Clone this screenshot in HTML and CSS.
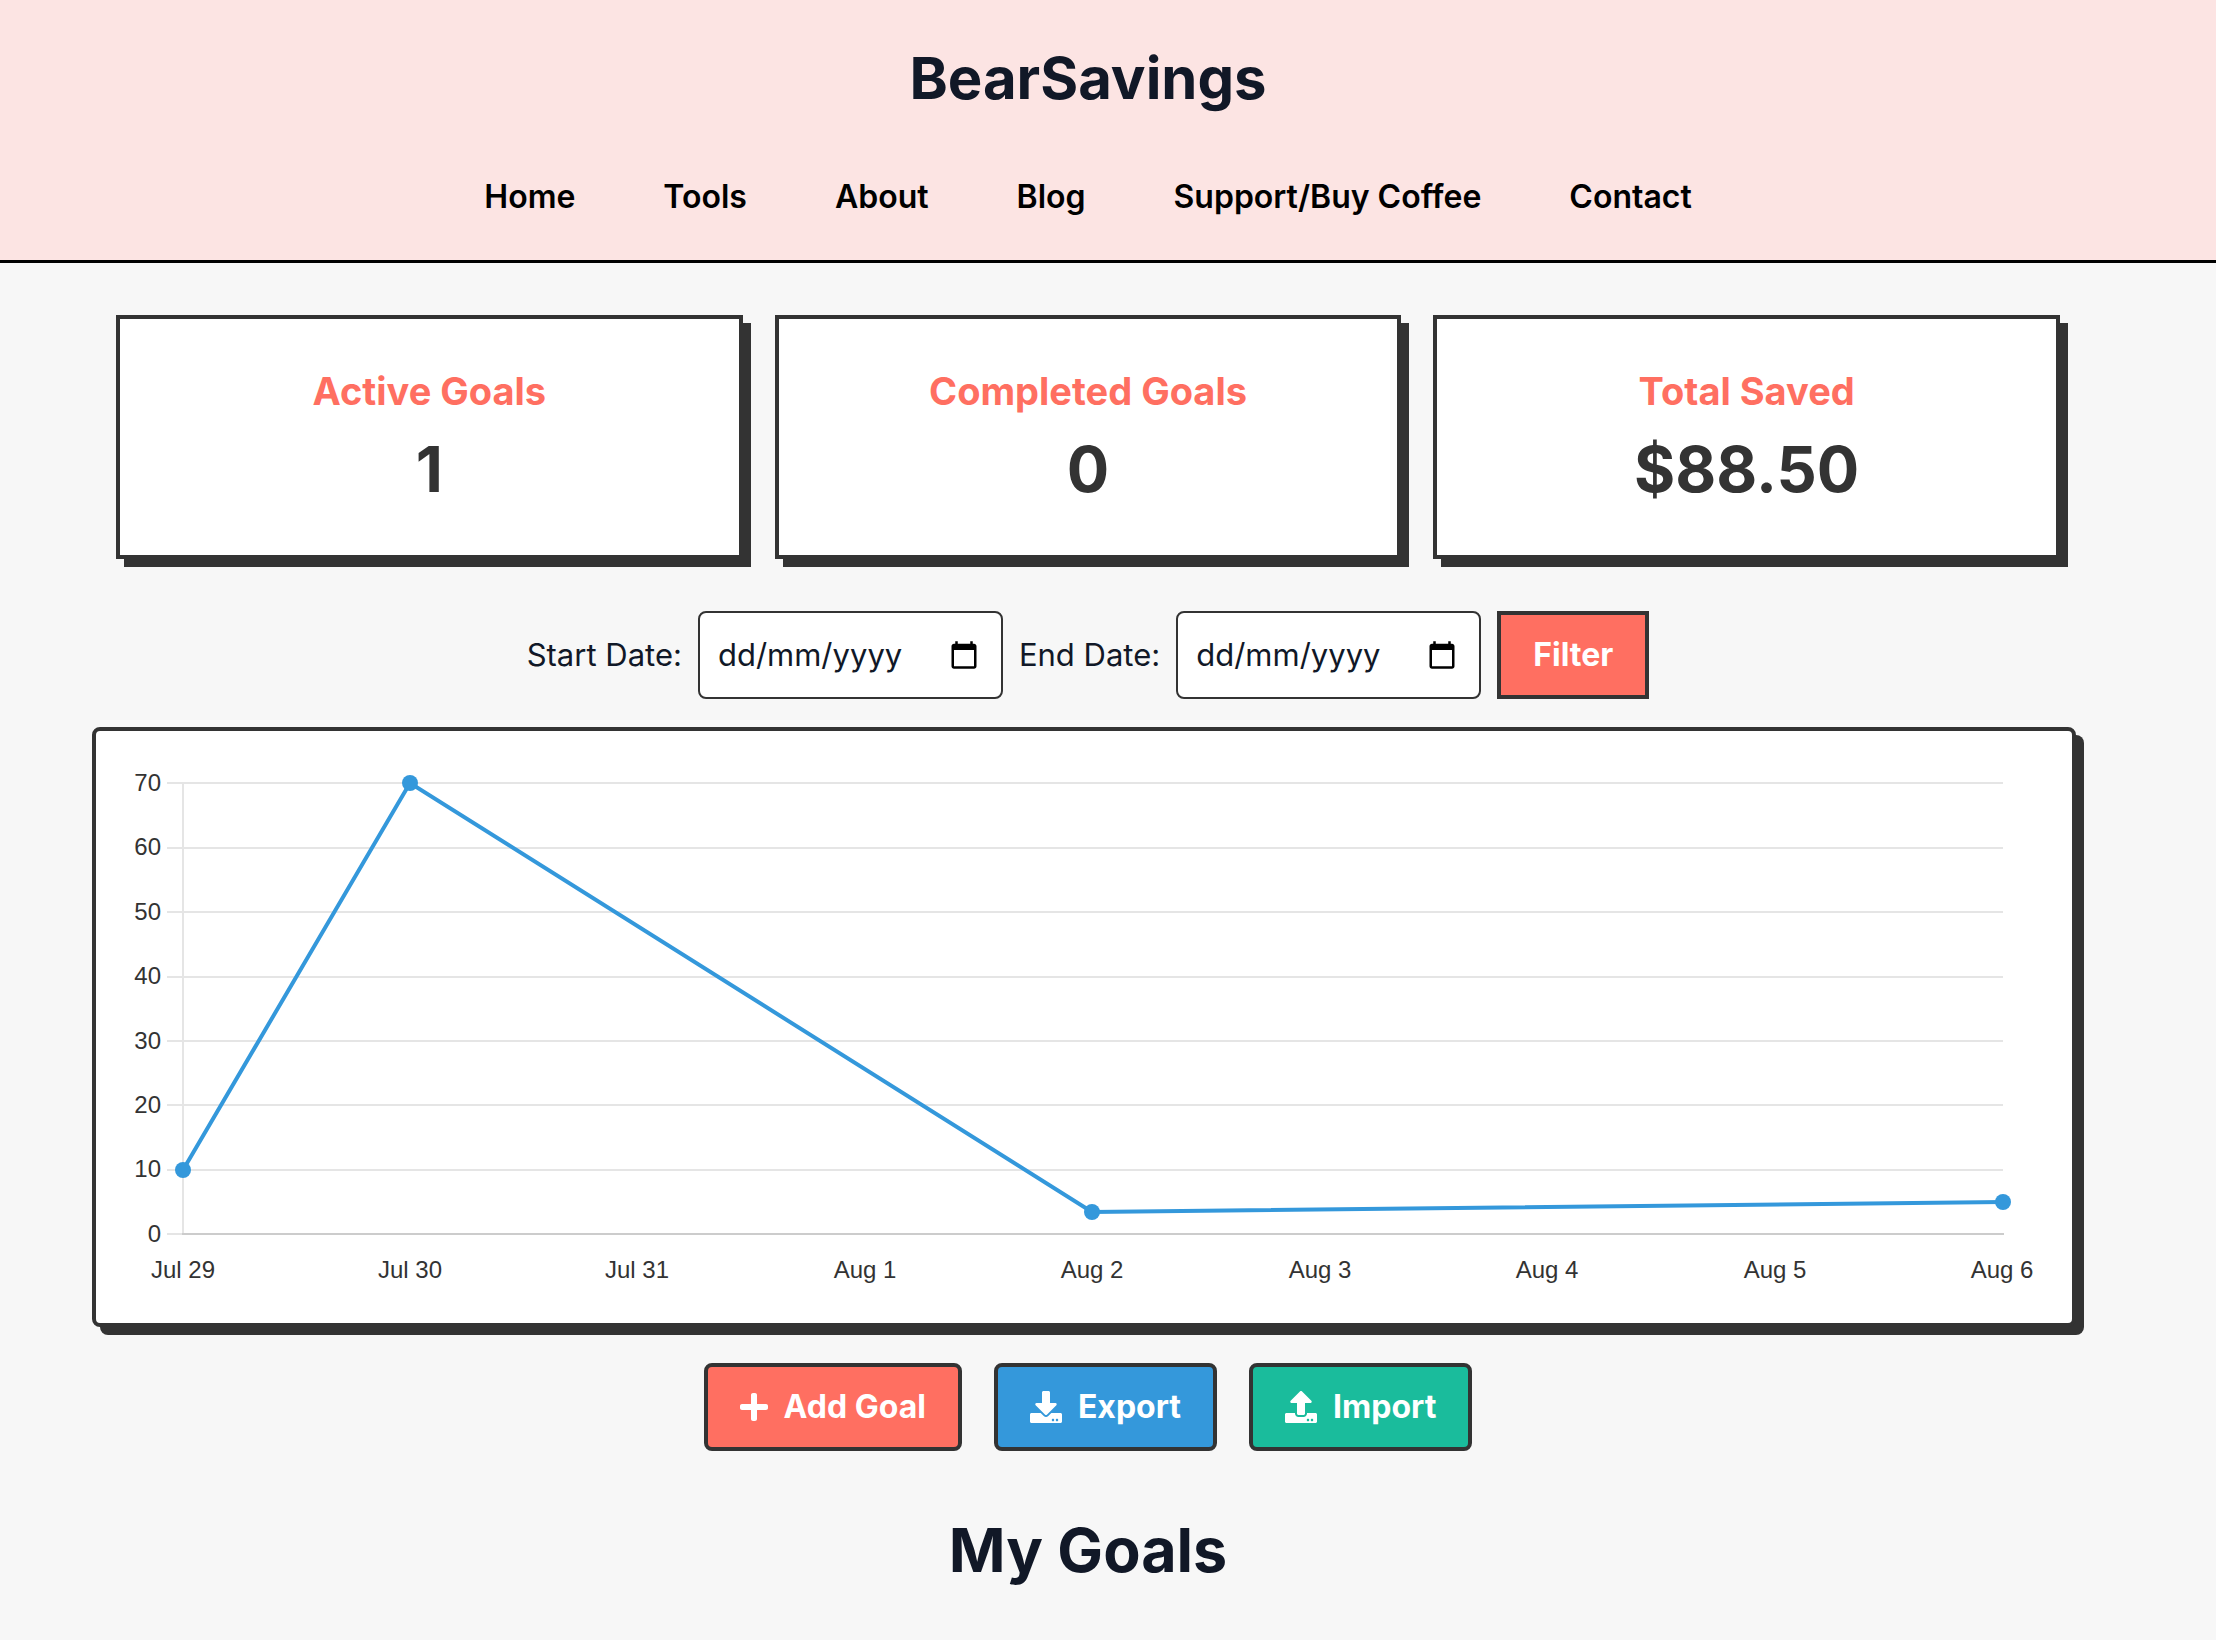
FILE: index.html
```html
<!DOCTYPE html>
<html lang="en">
<head>
    <meta charset="UTF-8">
    <meta name="viewport" content="width=device-width, initial-scale=1.0">
    <title>BearSavings</title>
    <link rel="stylesheet" href="styles.css">
</head>
<body>

<header class="site-header">
    <h1 class="site-title">BearSavings</h1>
    <nav class="site-nav">
        <a href="#">Home</a>
        <a href="#">Tools</a>
        <a href="#">About</a>
        <a href="#">Blog</a>
        <a href="#">Support/Buy Coffee</a>
        <a href="#">Contact</a>
    </nav>
</header>

<main class="container">
    <section class="stats">
        <div class="stat-card">
            <h2>Active Goals</h2>
            <p>1</p>
        </div>
        <div class="stat-card">
            <h2>Completed Goals</h2>
            <p>0</p>
        </div>
        <div class="stat-card">
            <h2>Total Saved</h2>
            <p>$88.50</p>
        </div>
    </section>

    <form class="date-filter">
        <label for="startDate">Start Date:</label>
        <div class="date-field">
            <input type="text" id="startDate" placeholder="dd/mm/yyyy">
            <button type="button" aria-label="Pick start date">
                <svg viewBox="0 0 24 24"><path d="M20 3h-1V1h-2v2H7V1H5v2H4c-1.1 0-2 .9-2 2v16c0 1.1.9 2 2 2h16c1.1 0 2-.9 2-2V5c0-1.1-.9-2-2-2zm0 18H4V8h16v13z"/></svg>
            </button>
        </div>
        <label for="endDate">End Date:</label>
        <div class="date-field">
            <input type="text" id="endDate" placeholder="dd/mm/yyyy">
            <button type="button" aria-label="Pick end date">
                <svg viewBox="0 0 24 24"><path d="M20 3h-1V1h-2v2H7V1H5v2H4c-1.1 0-2 .9-2 2v16c0 1.1.9 2 2 2h16c1.1 0 2-.9 2-2V5c0-1.1-.9-2-2-2zm0 18H4V8h16v13z"/></svg>
            </button>
        </div>
        <button type="submit" class="filter-btn">Filter</button>
    </form>

    <div class="chart-box">
        <svg class="chart" viewBox="0 0 1976 592">
            <!-- Grid lines -->
            <path class="grid" d="M71 52H1907M71 117H1907M71 181H1907M71 246H1907M71 310H1907M71 374H1907M71 439H1907M71 503H87M87 52V502"/>
            <path class="axis" d="M86 503H1908"/>

            <g class="y-labels">
                <text x="65" y="60">70</text>
                <text x="65" y="124">60</text>
                <text x="65" y="189">50</text>
                <text x="65" y="253">40</text>
                <text x="65" y="318">30</text>
                <text x="65" y="382">20</text>
                <text x="65" y="446">10</text>
                <text x="65" y="511">0</text>
            </g>

            <g class="x-labels">
                <text x="87" y="547">Jul 29</text>
                <text x="314" y="547">Jul 30</text>
                <text x="541" y="547">Jul 31</text>
                <text x="769" y="547">Aug 1</text>
                <text x="996" y="547">Aug 2</text>
                <text x="1224" y="547">Aug 3</text>
                <text x="1451" y="547">Aug 4</text>
                <text x="1679" y="547">Aug 5</text>
                <text x="1906" y="547">Aug 6</text>
            </g>

            <!-- Savings -->
            <polyline class="line" points="87,439 314,52 996,481 1907,471"/>
            <g class="points">
                <circle cx="87" cy="439" r="8"/>
                <circle cx="314" cy="52" r="8"/>
                <circle cx="996" cy="481" r="8"/>
                <circle cx="1907" cy="471" r="8"/>
            </g>
        </svg>
    </div>

    <div class="actions">
        <button type="button" class="btn btn-add">
            <svg viewBox="0 0 448 512" class="icon-plus"><path d="M416 208H272V64c0-17.67-14.33-32-32-32h-32c-17.67 0-32 14.33-32 32v144H32c-17.67 0-32 14.33-32 32v32c0 17.67 14.33 32 32 32h144v144c0 17.67 14.33 32 32 32h32c17.67 0 32-14.33 32-32V304h144c17.67 0 32-14.33 32-32v-32c0-17.67-14.33-32-32-32z"/></svg>
            Add Goal
        </button>
        <button type="button" class="btn btn-export">
            <svg viewBox="0 0 512 512"><path d="M216 0h80c13.3 0 24 10.7 24 24v168h87.7c17.8 0 26.7 21.5 14.1 34.1L269.7 378.3c-7.5 7.5-19.8 7.5-27.3 0L90.1 226.1c-12.6-12.6-3.7-34.1 14.1-34.1H192V24c0-13.3 10.7-24 24-24zm296 376v112c0 13.3-10.7 24-24 24H24c-13.3 0-24-10.7-24-24V376c0-13.3 10.7-24 24-24h146.7l49 49c20.1 20.1 52.5 20.1 72.6 0l49-49H488c13.3 0 24 10.7 24 24zm-124 88c0-11-9-20-20-20s-20 9-20 20 9 20 20 20 20-9 20-20zm64 0c0-11-9-20-20-20s-20 9-20 20 9 20 20 20 20-9 20-20z"/></svg>
            Export
        </button>
        <button type="button" class="btn btn-import">
            <svg viewBox="0 0 512 512"><path d="M296 384h-80c-13.3 0-24-10.7-24-24V192h-87.7c-17.8 0-26.7-21.5-14.1-34.1L242.3 5.7c7.5-7.5 19.8-7.5 27.3 0l152.2 152.2c12.6 12.6 3.7 34.1-14.1 34.1H320v168c0 13.3-10.7 24-24 24zm216-8v112c0 13.3-10.7 24-24 24H24c-13.3 0-24-10.7-24-24V376c0-13.3 10.7-24 24-24h136v8c0 30.9 25.1 56 56 56h80c30.9 0 56-25.1 56-56v-8h136c13.3 0 24 10.7 24 24zm-124 88c0-11-9-20-20-20s-20 9-20 20 9 20 20 20 20-9 20-20zm64 0c0-11-9-20-20-20s-20 9-20 20 9 20 20 20 20-9 20-20z"/></svg>
            Import
        </button>
    </div>

    <h2 class="section-title">My Goals</h2>
</main>

</body>
</html>
```
FILE: styles.css
```css
* {
    box-sizing: border-box;
}
body {
    margin: 0;
    font-family: Inter, "Liberation Sans", sans-serif;
    font-size: 31px;
    line-height: 48px;
    color: #111827;
    background-color: #f7f7f7;
}
h1, h2, p {
    margin: 0;
}
button, input {
    font: inherit;
    color: inherit;
}
button {
    cursor: pointer;
}
.site-header {
    padding: 42px 40px 39px 0;
    background-color: #fce4e3;
    border-bottom: 3px solid #000;
    text-align: center;
}
.site-title {
    font-size: 58px;
    line-height: 72px;
    font-weight: 700;
}
.site-nav {
    display: flex;
    justify-content: center;
    gap: 88px;
    margin-top: 59px;
    font-size: 32px;
}
.site-nav a {
    color: #000;
    font-weight: 600;
    text-decoration: none;
}
.container {
    padding: 52px 132px 40px 92px;
}
.stats {
    display: grid;
    grid-template-columns: repeat(3, 1fr);
    gap: 32px;
    padding: 0 24px;
}
.stat-card {
    padding: 42px 40px 38px;
    background-color: #fff;
    border: 4px solid #333;
    box-shadow: 8px 8px 0 #333;
    text-align: center;
}
.stat-card h2 {
    font-size: 38px;
    line-height: 60px;
    font-weight: 700;
    color: #ff6f61;
}
.stat-card p {
    font-size: 63px;
    line-height: 96px;
    font-weight: 700;
    color: #333;
}
.date-filter {
    display: flex;
    justify-content: center;
    align-items: center;
    gap: 16px;
    margin-top: 52px;
}
.date-field {
    display: flex;
    align-items: center;
    width: 305px;
    height: 88px;
    padding: 0 22px 0 18px;
    background-color: #fff;
    border: 2px solid #333;
    border-radius: 8px;
}
.date-field input {
    flex: 1;
    min-width: 0;
    padding: 0;
    border: none;
    outline: none;
    background: none;
}
.date-field input::placeholder {
    color: #111827;
    opacity: 1;
}
.date-field button {
    display: flex;
    padding: 0;
    border: none;
    background: none;
}
.date-field svg {
    width: 30px;
    height: 30px;
    fill: #000;
}
.filter-btn {
    height: 88px;
    padding: 0 32px;
    color: #fff;
    font-size: 32px;
    font-weight: 700;
    background-color: #ff6f61;
    border: 4px solid #333;
}
.chart-box {
    margin: 28px 8px 0 0;
    background-color: #fff;
    border: 4px solid #333;
    border-radius: 8px;
    box-shadow: 8px 8px 0 #333;
}
.chart {
    display: block;
    width: 100%;
    font-family: "Liberation Sans", Arial, sans-serif;
    font-size: 24px;
    fill: #333;
}
.grid {
    stroke: #e5e5e5;
    stroke-width: 2;
}
.axis {
    stroke: #ccc;
    stroke-width: 2;
}
.y-labels {
    text-anchor: end;
}
.x-labels {
    text-anchor: middle;
}
.line {
    fill: none;
    stroke: #3498db;
    stroke-width: 4;
}
.points {
    fill: #3498db;
}
.actions {
    display: flex;
    justify-content: center;
    gap: 32px;
    margin-top: 36px;
}
.btn {
    display: flex;
    align-items: center;
    gap: 16px;
    height: 88px;
    padding: 0 32px;
    color: #fff;
    font-size: 32px;
    font-weight: 700;
    border: 4px solid #333;
    border-radius: 8px;
}
.btn svg {
    width: 32px;
    height: 32px;
    fill: #fff;
}
.btn .icon-plus {
    width: 28px;
}
.btn-add {
    background-color: #ff6f61;
}
.btn-export {
    background-color: #3498db;
}
.btn-import {
    background-color: #1abc9c;
}
.section-title {
    margin-top: 59px;
    font-size: 61px;
    line-height: 80px;
    font-weight: 700;
    text-align: center;
}
```
